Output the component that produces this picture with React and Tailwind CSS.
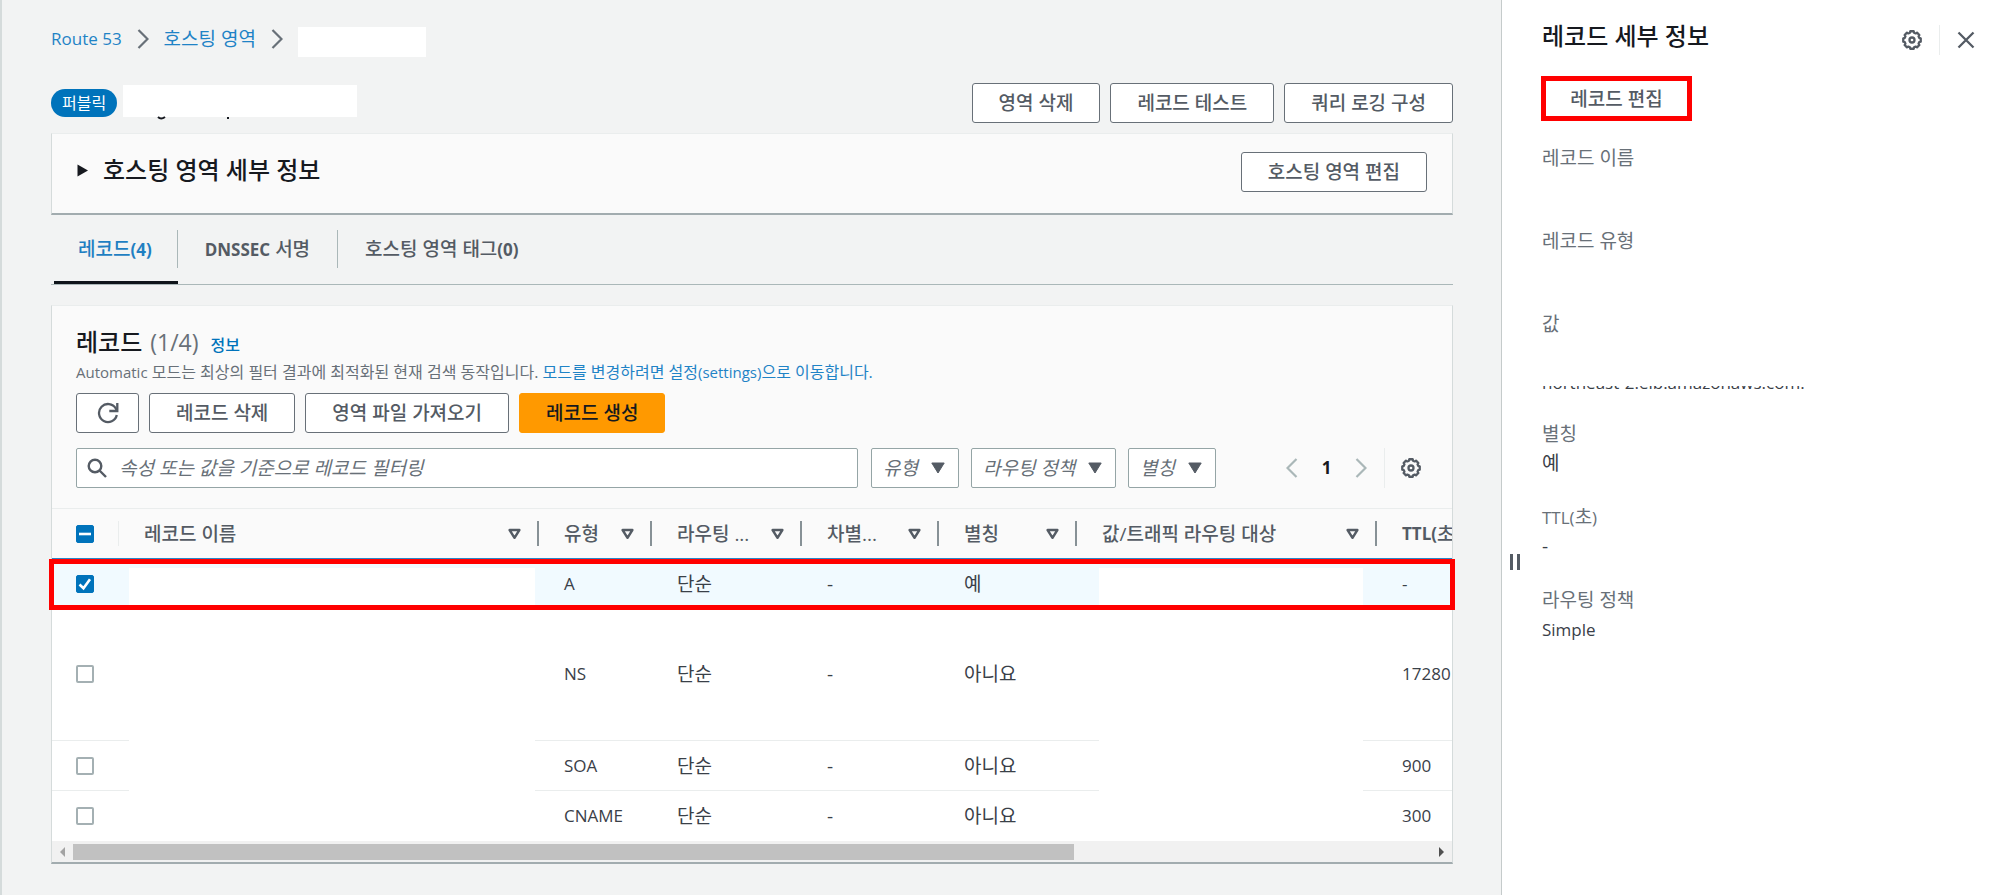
import React from 'react';

const buttonBase =
  'flex h-10 shrink-0 items-center justify-center whitespace-nowrap rounded-[3px] border px-[26px] text-[19px] leading-7 font-medium';
const plainButton = `${buttonBase} border-[#687078] bg-white text-[#545b64]`;

function Chevron({ className, flip }) {
  return (
    <svg viewBox="0 0 12 20" className={`h-5 w-3 shrink-0 ${className}`} fill="none" stroke="currentColor" strokeWidth="2.2" aria-hidden="true">
      <path d={flip ? 'M10.5 1 1.5 10l9 9' : 'M1.5 1l9 9-9 9'} />
    </svg>
  );
}

// Outline of an eight-toothed cog, as polar points around (10, 10).
const gearOutline = Array.from({ length: 8 }, (_, i) => i * 45)
  .flatMap((a) => [
    [a - 11, 8.9],
    [a + 11, 8.9],
    [a + 16, 7.5],
    [a + 29, 7.5],
  ])
  .map(([a, r]) => {
    const t = (a * Math.PI) / 180;
    return `${(10 + r * Math.cos(t)).toFixed(2)},${(10 + r * Math.sin(t)).toFixed(2)}`;
  })
  .join(' ');

function Gear() {
  return (
    <svg viewBox="0 0 20 20" className="size-5" fill="none" stroke="currentColor" strokeWidth="2.3" strokeLinejoin="round" aria-hidden="true">
      <polygon points={gearOutline} />
      <circle cx="10" cy="10" r="2.5" />
    </svg>
  );
}

function Caret() {
  return (
    <svg viewBox="0 0 14 12" className="pointer-events-none h-3 w-3.5 fill-[#545b64]" aria-hidden="true">
      <path d="M.8 1h12.4L7 11z" stroke="#545b64" strokeLinejoin="round" />
    </svg>
  );
}

function SortIcon() {
  return (
    <svg viewBox="0 0 13 12" className="h-3 w-[13px] shrink-0" fill="none" stroke="#545b64" strokeWidth="2.4" strokeLinejoin="round" aria-hidden="true">
      <path d="M1.6 2h9.8l-4.9 7.8z" />
    </svg>
  );
}

function Tick({ label, state }) {
  const filled = state !== 'off';
  return (
    <span className="grid size-[18px] place-items-center">
      <input
        type="checkbox"
        aria-label={label}
        defaultChecked={state === 'on'}
        className={`col-start-1 row-start-1 size-[18px] appearance-none rounded-[2px] border ${
          filled ? 'border-[#0073bb] bg-[#0073bb]' : 'border-2 border-[#a4b0b3] bg-white'
        }`}
      />
      {filled && (
        <svg viewBox="0 0 18 18" className="pointer-events-none col-start-1 row-start-1 size-[18px]" fill="none" stroke="#fff" strokeWidth="2.6" aria-hidden="true">
          <path d={state === 'on' ? 'M3.5 9.5l4 3.8 6.500-9' : 'M3 9h12'} />
        </svg>
      )}
    </span>
  );
}

function Filter({ label, className }) {
  return (
    <div className={`grid shrink-0 items-center ${className}`}>
      <select
        aria-label={label}
        className="col-start-1 row-start-1 h-10 w-full appearance-none rounded-[2px] border border-[#95a5a6] bg-white pl-[11px] text-[19px] italic text-[#687078]"
      >
        <option>{label}</option>
      </select>
      <span className="pointer-events-none col-start-1 row-start-1 mr-[14px] justify-self-end">
        <Caret />
      </span>
    </div>
  );
}

function Latin({ children }) {
  return <span className="text-[17px] leading-none">{children}</span>;
}

function LatinBold({ children }) {
  return <span className="text-[17px] leading-none font-bold">{children}</span>;
}

const columns = [
  { key: 'name', title: '레코드 이름' },
  { key: 'type', title: '유형' },
  { key: 'routing', title: '라우팅 ...' },
  { key: 'diff', title: '차별...' },
  { key: 'alias', title: '별칭' },
  { key: 'value', title: '값/트래픽 라우팅 대상' },
];

const rows = [
  { type: 'A', alias: '예', ttl: '-', height: 'h-[49px]', selected: true },
  { type: 'NS', alias: '아니요', ttl: '17280', height: 'h-[133px]' },
  { type: 'SOA', alias: '아니요', ttl: '900', height: 'h-[50px]' },
  { type: 'CNAME', alias: '아니요', ttl: '300', height: 'h-[50px]' },
];

function RecordRow({ row, last }) {
  const cell = `${last || row.selected ? '' : 'border-b border-[#eaeded]'} p-0`;
  const cover = row.selected ? 'top-[9px] bottom-0' : 'top-0 -bottom-px';
  return (
    <tr className={`${row.height} ${row.selected ? 'bg-[#f1faff]' : 'bg-white'}`}>
      <td className={`${cell} pl-6`}>
        <Tick label={`${row.type} 레코드 선택`} state={row.selected ? 'on' : 'off'} />
      </td>
      <td className={`${cell} relative`}>
        <div className={`absolute left-[10px] right-1 bg-white ${cover}`} />
      </td>
      <td className={`${cell} pl-[25px] text-[17px]`}>{row.type}</td>
      <td className={`${cell} pl-[25px]`}>단순</td>
      <td className={`${cell} pl-[25px]`}>-</td>
      <td className={`${cell} pl-[25px]`}>{row.alias}</td>
      <td className={`${cell} relative`}>
        <div className={`absolute left-[22px] right-[14px] bg-white ${cover}`} />
      </td>
      <td className={`${cell} pl-[25px] text-[17px]`}>{row.ttl}</td>
    </tr>
  );
}

const headCell = 'border-y border-t-[#eaeded] border-b-[#2a86c8] p-0 font-medium';

function RecordsTable() {
  return (
    <div className="relative">
      <div className="overflow-hidden">
        <table className="w-[1900px] table-fixed border-separate border-spacing-0 text-left text-[19px] leading-7 text-[#3a4048]">
          <colgroup>
            <col className="w-[67px]" />
            <col className="w-[420px]" />
            <col className="w-[113px]" />
            <col className="w-[150px]" />
            <col className="w-[137px]" />
            <col className="w-[138px]" />
            <col className="w-[300px]" />
            <col />
          </colgroup>
          <thead className="text-[19px] text-[#545b64]">
            <tr className="h-[51px]">
              <th className={headCell}>
                <div className="flex h-[25px] items-center border-r border-[#eaeded] pl-6">
                  <Tick label="모두 선택" state="mixed" />
                </div>
              </th>
              {columns.map((c) => (
                <th key={c.key} className={headCell}>
                  <div className="flex h-[25px] items-center justify-between border-r-2 border-[#879196] pl-[25px] pr-4">
                    <span className="whitespace-nowrap">{c.title}</span>
                    <SortIcon />
                  </div>
                </th>
              ))}
              <th className={`${headCell} pl-[25px]`}>
                <div className="flex h-[25px] items-center">
                  <LatinBold>TTL(</LatinBold>초<LatinBold>)</LatinBold>
                </div>
              </th>
            </tr>
          </thead>
          <tbody>
            {rows.map((r, i) => (
              <RecordRow key={r.type} row={r} last={i === rows.length - 1} />
            ))}
          </tbody>
        </table>
      </div>
      <div className="pointer-events-none absolute -left-[3px] -right-[3px] top-[51px] h-[51px] border-[5px] border-[#ff0000]" />
    </div>
  );
}

function Scrollbar() {
  return (
    <div className="flex h-[21px] items-center bg-[#f1f1f1] px-2" aria-hidden="true">
      <svg viewBox="0 0 5 10" className="h-2.5 w-[5px] fill-[#a3a3a3]"><path d="M5 0v10L0 5z" /></svg>
      <div className="mx-2 flex flex-1">
        <div className="h-4 w-14/19 bg-[#c1c1c1]" />
      </div>
      <svg viewBox="0 0 5 10" className="h-2.5 w-[5px] fill-[#505050]"><path d="M0 0v10l5-5z" /></svg>
    </div>
  );
}

const cardClass = 'border-x border-b-2 border-t border-x-[#d5dbdb] border-t-[#eaeded] border-b-[#a2acaf] bg-[#fafafa]';

function Main() {
  return (
    <main className="min-w-0 flex-1 border-l-2 border-[#d5dbdb] bg-[#f2f3f3] pl-[49px] pr-12 pt-[23px]">
      <nav className="flex h-8 items-center text-[19px] leading-7 text-[#1f83c6]" aria-label="탐색 경로">
        <a href="#route53" className="text-[17px]">Route 53</a>
        <Chevron className="mx-[15px] text-[#687078]" />
        <a href="#zones">호스팅 영역</a>
        <Chevron className="mx-[15px] text-[#687078]" />
        <span className="mt-1.5 h-[30px] w-32 bg-white" />
      </nav>

      <header className="mt-[27px] flex h-[41px] items-center justify-between">
        <div className="flex items-center gap-[5px]">
          <span className="flex h-7 items-center rounded-full bg-[#0073bb] px-[11px] text-[16px] leading-6 text-white">퍼블릭</span>
          <svg viewBox="0 0 236 36" className="h-9 w-[236px]" aria-hidden="true">
            <path d="M1 0h234v32H1z" fill="#fff" />
            <path d="M36 32q3 3 7 0M106 32v2" fill="none" stroke="#16191f" strokeWidth="2" />
          </svg>
        </div>
        <div className="flex gap-[10px]">
          <button type="button" className={plainButton}>영역 삭제</button>
          <button type="button" className={plainButton}>레코드 테스트</button>
          <button type="button" className={plainButton}>쿼리 로깅 구성</button>
        </div>
      </header>

      <section className={`mt-[10px] flex h-[82px] items-start justify-between px-[25px] pt-[18px] ${cardClass}`}>
        <button type="button" className="flex items-center gap-[15px] text-[24px] leading-9 font-medium text-[#16191f]">
          <svg viewBox="0 0 11 13" className="h-[13px] w-[11px] fill-current" aria-hidden="true"><path d="M.5.5v12l10.500-6z" /></svg>
          호스팅 영역 세부 정보
        </button>
        <button type="button" className={plainButton}>호스팅 영역 편집</button>
      </section>

      <div role="tablist" className="flex h-[70px] items-stretch border-b border-[#aab7b8] text-[19px] leading-7 font-medium text-[#545b64]">
        <button type="button" role="tab" aria-selected="true" className="flex flex-col justify-between pl-[3px]">
          <span className="mt-[15px] flex h-[38px] items-center border-r border-[#aab7b8] pl-6 pr-[25px] text-[#1f7fc2]">
            <span>레코드<LatinBold>(4)</LatinBold></span>
          </span>
          <span className="h-[3px] w-full bg-[#0f141a]" />
        </button>
        <button type="button" role="tab" aria-selected="false" className="mt-[15px] flex h-[38px] items-center border-r border-[#aab7b8] px-[27px]">
          <span><LatinBold>DNSSEC</LatinBold> 서명</span>
        </button>
        <button type="button" role="tab" aria-selected="false" className="mt-[15px] flex h-[38px] items-center px-[27px]">
          <span>호스팅 영역 태그<LatinBold>(0)</LatinBold></span>
        </button>
      </div>

      <section className={`mt-5 ${cardClass}`}>
        <div className="px-6 pb-5 pt-5">
          <div className="flex items-baseline text-[24px] leading-8">
            <h2 className="font-medium text-[#16191f]">레코드</h2>
            <span className="ml-2 text-[23px] text-[#687078]">(1/4)</span>
            <a href="#info" className="ml-3 text-[16px] font-medium text-[#0073bb]">정보</a>
          </div>
          <p className="mb-[10px] text-[16px] leading-[22px] text-[#687078]">
            <span className="text-[15px]">Automatic</span> 모드는 최상의 필터 결과에 최적화된 현재 검색 동작입니다.{' '}
            <a href="#settings" className="text-[#1f83c6]">
              모드를 변경하려면 설정<span className="text-[15px]">(settings)</span>으로 이동합니다.
            </a>
          </p>
          <div className="flex gap-[10px]">
            <button type="button" aria-label="새로 고침" className="flex h-10 w-[63px] items-center justify-center rounded-[3px] border border-[#687078] bg-white text-[#545b64]">
              <svg viewBox="0 0 22 22" className="size-[22px]" fill="none" stroke="currentColor" strokeWidth="2.3" aria-hidden="true">
                <path d="M19.800 13a9 9 0 1 1-1-6.500l1 2" />
                <path d="M20.300 1v8h-8" />
              </svg>
            </button>
            <button type="button" className={plainButton}>레코드 삭제</button>
            <button type="button" className={plainButton}>영역 파일 가져오기</button>
            <button type="button" className={`${buttonBase} border-[#ff9900] bg-[#ff9900] text-[#16191f]`}>레코드 생성</button>
          </div>
          <div className="mt-[15px] flex items-center">
            <label className="flex h-10 w-[782px] min-w-0 items-center gap-3 rounded-[2px] border border-[#95a5a6] bg-white pl-[10px]">
              <svg viewBox="0 0 20 20" className="size-5 shrink-0" fill="none" stroke="#545b64" strokeWidth="2.4" aria-hidden="true">
                <circle cx="8" cy="8" r="6.3" />
                <path d="M12.500 12.500l6.500 6.500" />
              </svg>
              <input
                type="text"
                aria-label="레코드 필터링"
                placeholder="속성 또는 값을 기준으로 레코드 필터링"
                className="h-full min-w-0 flex-1 bg-transparent text-[19px] italic outline-none placeholder:text-[#687078]"
              />
            </label>
            <div className="ml-[13px] flex gap-3">
              <Filter label="유형" className="w-[88px]" />
              <Filter label="라우팅 정책" className="w-[145px]" />
              <Filter label="별칭" className="w-[88px]" />
            </div>
            <div className="ml-auto flex items-center text-[#aab7b8]">
              <button type="button" aria-label="이전 페이지"><Chevron flip className="text-[#aab7b8]" /></button>
              <span className="w-[57px] text-center text-[17px] font-bold text-[#16191f]">1</span>
              <button type="button" aria-label="다음 페이지"><Chevron className="text-[#aab7b8]" /></button>
              <span className="ml-[17px] h-10 w-px bg-[#eaeded]" />
              <button type="button" aria-label="환경설정" className="ml-4 mr-[7px] text-[#545b64]"><Gear /></button>
            </div>
          </div>
        </div>
        <RecordsTable />
        <Scrollbar />
      </section>
    </main>
  );
}

function Detail({ label, children }) {
  return (
    <div className="mb-6">
      <dt className="text-[19px] leading-[30px] text-[#687078]">{label}</dt>
      <dd className="min-h-[29px] text-[19px] leading-[29px] text-[#3a4048]">{children}</dd>
    </div>
  );
}

function Panel() {
  return (
    <aside className="relative w-[499px] shrink-0 border-l border-[#c5cbcb] bg-white pl-10 pt-5">
      <div className="flex items-start justify-between pr-[25px]">
        <h2 className="text-[24px] leading-8 font-medium text-[#16191f]">레코드 세부 정보</h2>
        <div className="flex items-center pt-[5px] text-[#545b64]">
          <button type="button" aria-label="환경설정"><Gear /></button>
          <span className="mx-[17px] h-[30px] w-px bg-[#eaeded]" />
          <button type="button" aria-label="닫기">
            <svg viewBox="0 0 18 18" className="size-[18px]" fill="none" stroke="currentColor" strokeWidth="2.3" aria-hidden="true">
              <path d="M1.500 1.500l15 15M16.500 1.500l-15 15" />
            </svg>
          </button>
        </div>
      </div>
      <button
        type="button"
        className="-ml-px mt-[21px] flex h-[45px] w-[151px] items-center justify-center border-[5px] border-[#ff0000] bg-white text-[19px] leading-7 font-medium text-[#545b64]"
      >
        레코드 편집
      </button>
      <dl className="mt-[22px]">
        <Detail label="레코드 이름" />
        <Detail label="레코드 유형" />
        <Detail label="값">
          <div className="relative h-14 pt-[29px] text-[17px]">
            northeast-2.elb.amazonaws.com.
            <div className="absolute inset-x-0 top-0 h-[47px] bg-white" />
          </div>
        </Detail>
        <Detail label="별칭">예</Detail>
        <Detail label={<><Latin>TTL(</Latin>초<Latin>)</Latin></>}>-</Detail>
        <Detail label="라우팅 정책"><Latin>Simple</Latin></Detail>
      </dl>
      <button type="button" aria-label="패널 크기 조정" className="absolute left-2 top-[554px] flex gap-1">
        <span className="h-4 w-[3px] bg-[#545b64]" />
        <span className="h-4 w-[3px] bg-[#545b64]" />
      </button>
    </aside>
  );
}

export default function App() {
  return (
    <div className="flex min-h-screen font-['Open_Sans','Noto_Sans_CJK_KR',sans-serif]" lang="ko">
      <Main />
      <Panel />
    </div>
  );
}
